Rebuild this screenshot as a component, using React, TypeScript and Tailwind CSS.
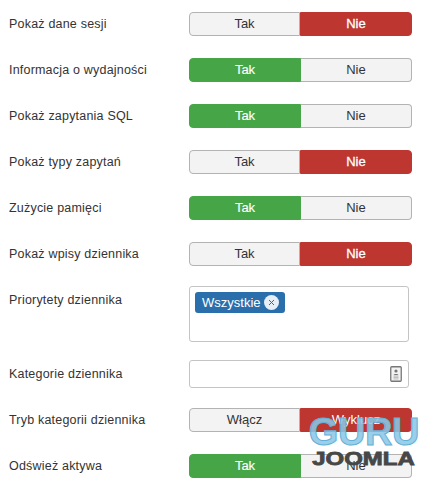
const labelClass = "w-[180px] shrink-0 text-[12.5px] leading-6 text-[#333333] tracking-[0.2px]";

function Toggle({ left = "Tak", right = "Nie", active }: { left?: string; right?: string; active: "left" | "right" }) {
    const heavy = right === "Nie" ? "[-webkit-text-stroke:0.3px_#ffffff]" : "";
    return (
        <div className="flex w-[223px] h-6 text-[13px] leading-[22px] text-center text-[#333333]">
            <div
                className={
                    active === "left"
                        ? "w-[112px] rounded-l bg-[#46a546] border border-[#46a546] text-white [-webkit-text-stroke:0.15px_#ffffff]"
                        : "w-[111px] rounded-l bg-[#f3f3f3] border border-[#b3b3b3]"
                }
            >
                {left}
            </div>
            <div
                className={
                    active === "right"
                        ? `flex-1 rounded-r bg-[#bd362f] border border-[#bd362f] text-white ${heavy}`
                        : "flex-1 rounded-r bg-[#f3f3f3] border border-[#b3b3b3] border-l-0"
                }
            >
                {right}
            </div>
        </div>
    );
}

function Row({ label, children, className, labelOffset }: { label: string; children: React.ReactNode; className: string; labelOffset?: string }) {
    return (
        <div className={`flex items-start ${className}`}>
            <div className={`${labelClass} ${labelOffset ?? ""}`}>{label}</div>
            {children}
        </div>
    );
}

export default function App() {
    return (
        <div className="relative w-[445px] h-[488px] overflow-hidden bg-white pl-[9px] pt-3 font-['Liberation_Sans',Arial,sans-serif]">
            <Row label="Pokaż dane sesji" className="mb-[22px]"><Toggle active="right" /></Row>
            <Row label="Informacja o wydajności" className="mb-[22px]"><Toggle active="left" /></Row>
            <Row label="Pokaż zapytania SQL" className="mb-[22px]"><Toggle active="left" /></Row>
            <Row label="Pokaż typy zapytań" className="mb-[22px]"><Toggle active="right" /></Row>
            <Row label="Zużycie pamięci" className="mb-[22px]"><Toggle active="left" /></Row>
            <Row label="Pokaż wpisy dziennika" className="mb-5"><Toggle active="right" /></Row>
            <Row label="Priorytety dziennika" labelOffset="pt-[2px]" className="mb-[18px]">
                <div className="w-[220px] h-14 rounded-[3px] border border-[#c4c4c4] pl-[5px] pt-[3px]">
                    <div className="inline-flex items-center h-[21px] rounded-[3px] bg-[#2a6fac] pl-[7px] pr-[6px] text-[13px] text-white">
                        Wszystkie
                        <svg viewBox="0 0 15 15" className="ml-[3px] w-[15px] h-[15px]">
                            <circle cx="7.5" cy="7.5" r="7.5" fill="#e6eef6" />
                            <path d="M5 5l5 5M10 5l-5 5" stroke="#2a6fac" strokeWidth="1" fill="none" />
                        </svg>
                    </div>
                </div>
            </Row>
            <Row label="Kategorie dziennika" labelOffset="pt-[2px]" className="mb-5">
                <div className="flex items-center justify-end w-[220px] h-[28px] rounded-[3px] border border-[#c4c4c4] pr-[6px]">
                    <svg viewBox="0 0 12 16" className="w-3 h-4">
                        <rect x="0.75" y="0.75" width="10.5" height="14.5" rx="1" fill="#f2f2f2" stroke="#777777" strokeWidth="1.3" />
                        <circle cx="6" cy="5" r="1.6" fill="#777777" />
                        <path d="M3.5 9.2c0-1.6 5-1.6 5 0z" fill="#777777" />
                        <rect x="3.5" y="10.5" width="5" height="1.2" fill="#aaaaaa" />
                        <rect x="3.5" y="12.3" width="5" height="1.2" fill="#c4c4c4" />
                    </svg>
                </div>
            </Row>
            <Row label="Tryb kategorii dziennika" className="mb-[22px]"><Toggle left="Włącz" right="Wyklucz" active="right" /></Row>
            <Row label="Odśwież aktywa" className=""><Toggle active="left" /></Row>

            {/* watermark */}
            <div className="absolute left-[300px] top-[414px] w-[128px] flex flex-col items-center pointer-events-none">
                <div className="text-[38px] leading-[36px] font-bold tracking-[-0.4px] text-[#8cc8e6]/90 [-webkit-text-stroke:1px_#62b0d8]">GURU</div>
                <div className="text-[18px] leading-[18px] font-bold text-[#474747] [-webkit-text-stroke:0.8px_#474747] scale-x-[1.33]">JOOMLA</div>
            </div>
        </div>
    );
}
